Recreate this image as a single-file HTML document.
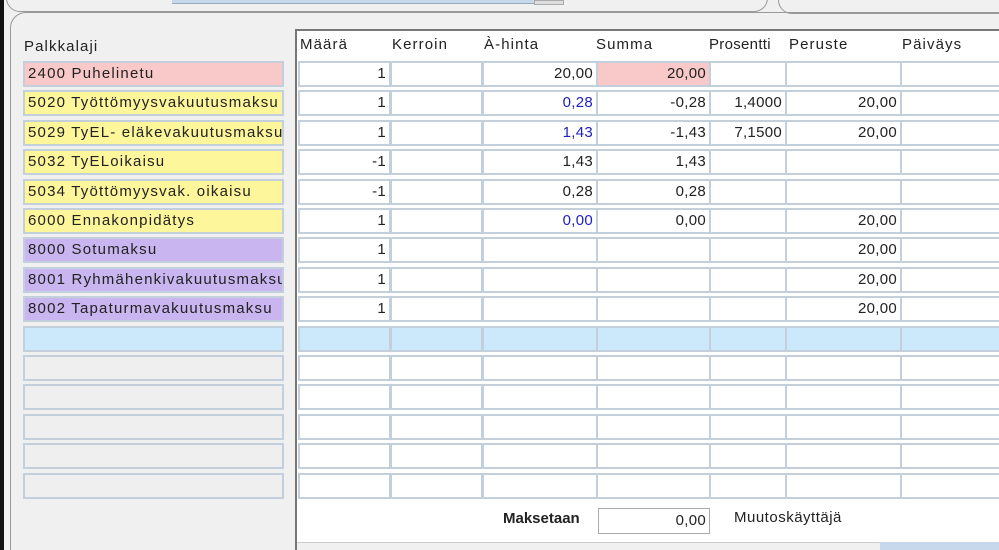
<!DOCTYPE html><html style="overflow:hidden"><head><style>
html,body{overflow:hidden;height:550px}
body{margin:0;width:999px;height:550px;overflow:hidden;background:#f0f0f0;font-family:"Liberation Sans",sans-serif;font-size:15px;letter-spacing:1.1px;color:#222;position:relative}
.a{position:absolute;box-sizing:border-box;white-space:nowrap}
.c{position:absolute;box-sizing:border-box;height:26px;border:2px solid #c3d0dc;background:#fff;line-height:22px;padding:0 3px;white-space:nowrap;overflow:hidden;letter-spacing:0.3px}
.r{text-align:right}
.b{color:#2020c0}
.h{position:absolute;top:36px;white-space:nowrap}
</style></head><body>
<div class="a" style="left:0;top:0;width:4px;height:550px;background:#111"></div>
<div class="a" style="left:6px;top:-20px;width:762px;height:32px;border:1px solid #999;border-radius:14px"></div>
<div class="a" style="left:172px;top:0;width:362px;height:4px;background:#c8d8ec;border-bottom:1px solid #9ab"></div>
<div class="a" style="left:534px;top:0;width:30px;height:5px;background:#ddd;border:1px solid #aaa"></div>
<div class="a" style="left:778px;top:-20px;width:240px;height:34px;border:1px solid #999;border-radius:14px"></div>
<div class="a" style="left:10px;top:12px;width:1010px;height:560px;border:1px solid #999;border-radius:16px"></div>
<div class="a" style="left:295px;top:29px;width:720px;height:530px;background:#fff;border:2px solid #777;border-right:none;border-bottom:none"></div>
<div class="h" style="left:24px;top:38px">Palkkalaji</div>
<div class="h" style="left:300px">Määrä</div>
<div class="h" style="left:392px">Kerroin</div>
<div class="h" style="left:484px">À-hinta</div>
<div class="h" style="left:596px">Summa</div>
<div class="h" style="left:709px;letter-spacing:0.3px">Prosentti</div>
<div class="h" style="left:789px">Peruste</div>
<div class="h" style="left:902px">Päiväys</div>
<div id="g"></div>
<div class="a" style="left:503px;top:510px;font-weight:bold;letter-spacing:0">Maksetaan</div>
<div class="c r" style="left:598px;top:508px;width:112px;border-color:#aaa;border-width:1px;line-height:24px">0,00</div>
<div class="a" style="left:734px;top:509px;letter-spacing:0.5px">Muutoskäyttäjä</div>
<div class="a" style="left:297px;top:542px;width:710px;height:10px;background:#f0f0f0;border-top:1px solid #ccc"></div>
<div class="a" style="left:880px;top:542px;width:120px;height:10px;background:#c8d8ec"></div>
<script>
var L=[["2400 Puhelinetu","#f9c9c9"],["5020 Työttömyysvakuutusmaksu","#fdf69b"],["5029 TyEL- eläkevakuutusmaksu","#fdf69b"],["5032 TyELoikaisu","#fdf69b"],["5034 Työttömyysvak. oikaisu","#fdf69b"],["6000 Ennakonpidätys","#fdf69b"],["8000 Sotumaksu","#c9b5ef"],["8001 Ryhmähenkivakuutusmaksu","#c9b5ef"],["8002 Tapaturmavakuutusmaksu","#c9b5ef"],["","#cce8fb"]];
var D=[["1","","20,00","20,00","","",""],["1","","b0,28","-0,28","1,4000","20,00",""],["1","","b1,43","-1,43","7,1500","20,00",""],["-1","","1,43","1,43","","",""],["-1","","0,28","0,28","","",""],["1","","b0,00","0,00","","20,00",""],["1","","","","","20,00",""],["1","","","","","20,00",""],["1","","","","","20,00",""]];
var X=[[298,93],[390,93],[482,116],[596,115],[709,78],[785,117],[900,110]];
var h="";
for(var i=0;i<15;i++){var y=61+i*29.4;var l=L[i]||["","#efefef"];
h+='<div class="c" style="left:23px;top:'+y+'px;width:261px;letter-spacing:1.2px;background:'+l[1]+'">'+l[0]+'</div>';
for(var j=0;j<7;j++){var t=(D[i]||[])[j]||"";var bl=t[0]=="b";if(bl)t=t.slice(1);var bg=i==9?"#cce8fb":(i==0&&j==3?"#f9c9c9":"#fff");
h+='<div class="c r'+(bl?' b':'')+'" style="left:'+X[j][0]+'px;top:'+y+'px;width:'+X[j][1]+'px;background:'+bg+'">'+t+'</div>';}}
document.getElementById("g").innerHTML=h;
</script>
</body></html>
